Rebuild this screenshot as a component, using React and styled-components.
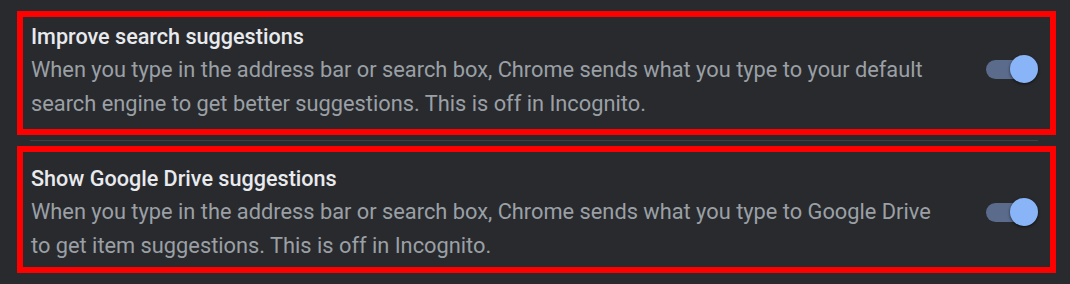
import React from "react";
import styled, { createGlobalStyle } from "styled-components";

const Global = createGlobalStyle`
  html, body { margin: 0; padding: 0; background: #292a2d; }
  body { font-family: Roboto, "Liberation Sans", sans-serif; -webkit-font-smoothing: antialiased; }
`;

const Page = styled.div`
  width: 1070px;
  height: 284px;
  box-sizing: border-box;
  padding: 11px 14px 0 17px;
  display: flex;
  flex-direction: column;
  background: #292a2d;
`;

const Highlight = styled.section`
  box-sizing: border-box;
  height: ${(p) => p.$h}px;
  border: 6px solid #ff0000;
  padding: ${(p) => p.$pt}px 12px 0 8px;
  display: flex;
  align-items: flex-start;
`;

const Divider = styled.div`
  height: 1px;
  margin: 5px 18px 5px 13px;
  background: #3f4044;
`;

const Body = styled.div`
  flex: 1;
  display: flex;
  align-items: center;
`;

const TextCol = styled.div`
  flex: 1;
  display: flex;
  flex-direction: column;
`;

const Title = styled.div`
  font-size: 21.6px;
  line-height: 33px;
  font-weight: 500;
  color: #e8eaed;
`;

const Desc = styled.div`
  font-size: 21.8px;
  line-height: 33.5px;
  font-weight: 400;
  color: #9aa0a6;
  white-space: nowrap;
`;

const Toggle = styled.div`
  position: relative;
  width: 52px;
  height: 28px;
  flex: none;
  margin-top: ${(p) => p.$dy}px;
`;

const Track = styled.div`
  position: absolute;
  left: 0;
  top: 5px;
  width: 45px;
  height: 19px;
  border-radius: 10px;
  background: #5b6b8b;
`;

const Knob = styled.div`
  position: absolute;
  right: 0;
  top: 0;
  width: 28px;
  height: 28px;
  border-radius: 50%;
  background: #8ab4f8;
  box-shadow: 0 1px 3px rgba(0, 0, 0, 0.6);
`;

const rows = [
  {
    title: "Improve search suggestions",
    lines: [
      "When you type in the address bar or search box, Chrome sends what you type to your default",
      "search engine to get better suggestions. This is off in Incognito.",
    ],
    h: 124,
    pt: 3,
    dy: -2,
  },
  {
    title: "Show Google Drive suggestions",
    lines: [
      "When you type in the address bar or search box, Chrome sends what you type to Google Drive",
      "to get item suggestions. This is off in Incognito.",
    ],
    h: 127,
    pt: 10,
    dy: 0,
  },
];

function Row({ r }) {
  return (
    <Highlight $h={r.h} $pt={r.pt}>
      <Body>
        <TextCol>
          <Title>{r.title}</Title>
          <Desc>
            {r.lines[0]}
            <br />
            {r.lines[1]}
          </Desc>
        </TextCol>
        <Toggle $dy={r.dy}>
          <Track />
          <Knob />
        </Toggle>
      </Body>
    </Highlight>
  );
}

export default function App() {
  return (
    <>
      <Global />
      <Page>
        <Row r={rows[0]} />
        <Divider />
        <Row r={rows[1]} />
      </Page>
    </>
  );
}
